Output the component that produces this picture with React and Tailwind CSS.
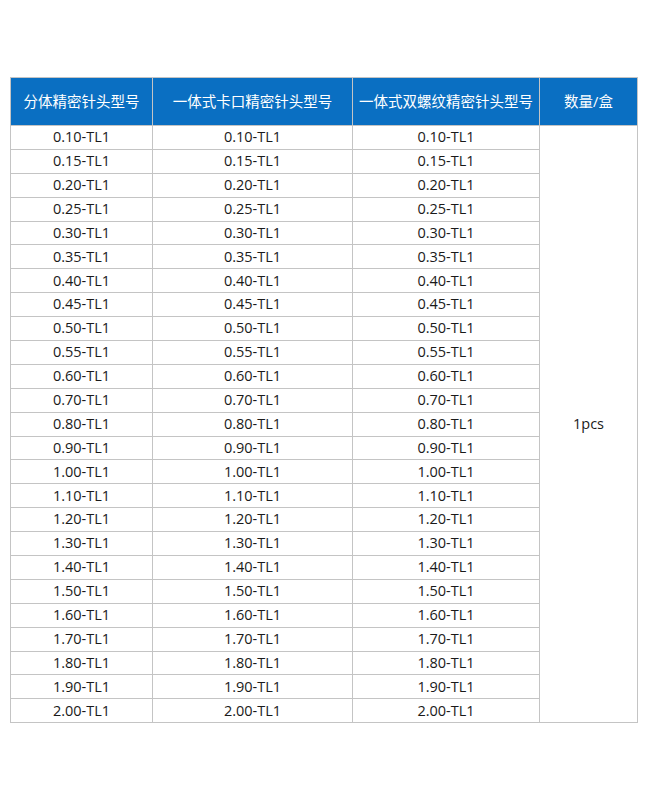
import React from 'react';

const sizes = [
  '0.10', '0.15', '0.20', '0.25', '0.30', '0.35', '0.40', '0.45', '0.50', '0.55',
  '0.60', '0.70', '0.80', '0.90', '1.00', '1.10', '1.20', '1.30', '1.40', '1.50',
  '1.60', '1.70', '1.80', '1.90', '2.00',
];

const headers = ['分体精密针头型号', '一体式卡口精密针头型号', '一体式双螺纹精密针头型号', '数量/盒'];

export default function App() {
  return (
    <div className="w-[649px] h-[800px] bg-white pt-[77px] pl-[10px]" style={{ fontFamily: '"Open Sans", "Noto Sans CJK SC", sans-serif' }}>
      <table className="border-collapse table-fixed w-[627px] text-[#1a1a1a]">
        <colgroup>
          <col className="w-[142px]" />
          <col className="w-[200px]" />
          <col className="w-[187px]" />
          <col className="w-[98px]" />
        </colgroup>
        <thead>
          <tr className="h-[48px] bg-[#0a6fc2]">
            {headers.map((h) => (
              <th key={h} className="border border-[#c4c4c4] text-white font-normal text-[14.5px] text-center p-0 whitespace-nowrap">
                {h}
              </th>
            ))}
          </tr>
        </thead>
        <tbody>
          {sizes.map((s, i) => (
            <tr key={s} className="h-[23.9px]">
              <td className="border border-[#c4c4c4] text-center text-[14.5px] p-0 leading-none">{s}-TL1</td>
              <td className="border border-[#c4c4c4] text-center text-[14.5px] p-0 leading-none">{s}-TL1</td>
              <td className="border border-[#c4c4c4] text-center text-[14.5px] p-0 leading-none">{s}-TL1</td>
              {i === 0 && (
                <td rowSpan={sizes.length} className="border border-[#c4c4c4] text-center text-[14.5px] p-0 align-middle">
                  1pcs
                </td>
              )}
            </tr>
          ))}
        </tbody>
      </table>
    </div>
  );
}
